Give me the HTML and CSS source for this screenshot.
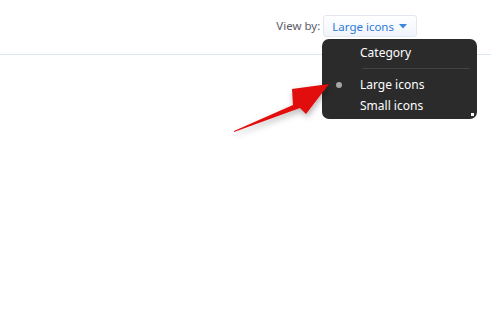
FILE: index.html
```html
<!DOCTYPE html>
<html lang="en">
<head>
    <meta charset="UTF-8">
    <meta name="viewport" content="width=device-width, initial-scale=1.0">
    <title>View by</title>
    <link rel="stylesheet" href="styles.css">
</head>
<body>
    <div class="toolbar">
        <span class="label">View by:</span>
        <div class="view-button">
            <span>Large icons</span>
            <svg class="caret" width="8" height="5" viewBox="0 0 8 5"><path d="M0 0 L8 0 L4 4.5 Z" fill="#3b87e0"/></svg>
        </div>
    </div>

    <!-- dropdown opened from the view button -->
    <div class="menu">
        <div class="item">Category</div>
        <div class="sep"></div>
        <div class="item checked">Large icons</div>
        <div class="item">Small icons</div>
        <div class="grip"></div>
    </div>

    <!-- red pointer arrow -->
    <svg class="pointer" width="120" height="70" viewBox="0 0 120 70">
        <defs>
            <filter id="shade" x="-20%" y="-30%" width="140%" height="160%">
                <feDropShadow dx="1" dy="3" stdDeviation="3" flood-color="#000" flood-opacity="0.3"/>
            </filter>
        </defs>
        <path d="M9 56 L68 30 L67 14 L104 9 L81 39 L75 33 L9 57 Z" fill="#e20a0a" filter="url(#shade)"/>
    </svg>
</body>
</html>
```

FILE: styles.css
```css
body {
    margin: 0;
    background: #fff;
    font-family: "Noto Sans", "Open Sans", sans-serif;
    font-size: 11.5px;
    height: 310px;
    overflow: hidden;
    position: relative;
}

.toolbar {
    height: 55px;
    border-bottom: 1px solid #dce5f0;
    display: flex;
    justify-content: flex-end;
    align-items: flex-start;
    padding: 15px 74px 0 0;
    box-sizing: border-box;
}

.label {
    color: #5b5b6b;
    line-height: 22px;
    margin-right: 3px;
}

.view-button {
    height: 22px;
    box-sizing: border-box;
    border: 1px solid #e3e8f0;
    border-radius: 3px;
    background: linear-gradient(#ffffff, #f0f5fc);
    color: #2f7ad8;
    display: flex;
    align-items: center;
    padding: 0 9px 0 8px;
    gap: 5px;
}

.caret {
    display: block;
}

.menu {
    position: absolute;
    left: 322px;
    top: 39px;
    width: 155px;
    height: 80px;
    box-sizing: border-box;
    background: #2b2b2b;
    border-radius: 7px;
    padding: 3px 0 0 38px;
    color: #fff;
    font-size: 12px;
}

.item {
    line-height: 21px;
    position: relative;
}

.item.checked::before {
    content: "";
    position: absolute;
    left: -24px;
    top: 8px;
    width: 6px;
    height: 6px;
    border-radius: 50%;
    background: #a5a5a5;
}

.sep {
    height: 1px;
    background: #444;
    margin: 5px 7px 5px 2px;
}

.grip {
    position: absolute;
    right: 3px;
    bottom: 3px;
    width: 3px;
    height: 3px;
    background: #fff;
}

.pointer {
    position: absolute;
    left: 225px;
    top: 75px;
}
```
